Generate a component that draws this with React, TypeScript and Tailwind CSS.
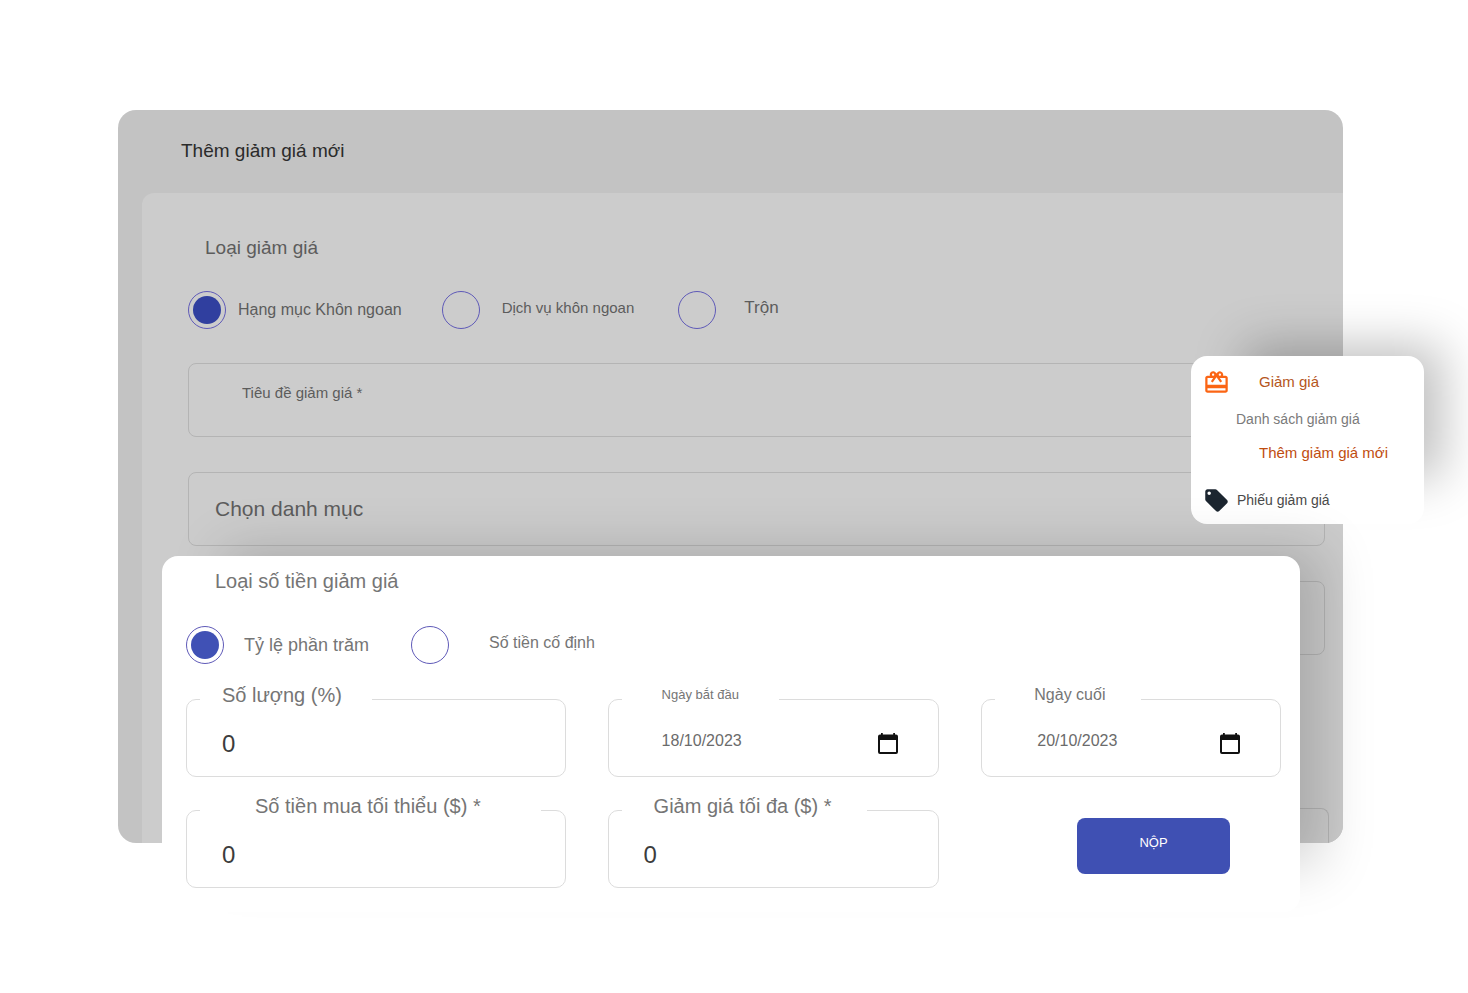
import { useState, type ReactNode } from "react";
import { MdCardGiftcard, MdLocalOffer } from "react-icons/md";

type RadioProps = {
    name: string;
    label: string;
    checked: boolean;
    onChange: () => void;
    className: string;
    textClass: string;
    dotClass: string;
};

function Radio({ name, label, checked, onChange, className, textClass, dotClass }: RadioProps) {
    return (
        <label className={`flex items-center ${className}`}>
            <input
                type="radio"
                name={name}
                checked={checked}
                onChange={onChange}
                className={`size-[38px] shrink-0 appearance-none rounded-full border border-[#5f5ab8] bg-clip-content p-1 ${dotClass}`}
            />
            <span className={textClass}>{label}</span>
        </label>
    );
}

type FieldProps = {
    id: string;
    label: string;
    legendClass: string;
    children: ReactNode;
};

// Outlined field with the label sitting in a notch of the top border
function Field({ id, label, legendClass, children }: FieldProps) {
    return (
        <fieldset className="min-w-0 rounded-[10px] border border-[#dcdcdc]">
            <legend className={`ml-[13px] pb-2 leading-6 text-[#757575] ${legendClass}`}>
                <label htmlFor={id}>{label}</label>
            </legend>
            <div className="flex h-[61px] items-center pb-1">{children}</div>
        </fieldset>
    );
}

function CalendarIcon() {
    return (
        <svg viewBox="0 0 20 21" className="h-[21px] w-5" aria-hidden="true">
            <path
                fill="#111"
                fillRule="evenodd"
                d="M3 0h1.800v1.500h10.400V0H17v1.500h1a2 2 0 0 1 2 2V19a2 2 0 0 1-2 2H2a2 2 0 0 1-2-2V3.500a2 2 0 0 1 2-2h1V0ZM2 7v12h16V7H2Z"
            />
        </svg>
    );
}

const discountTypes = [
    { label: "Hạng mục Khôn ngoan", className: "gap-3 mr-10", textClass: "text-base" },
    { label: "Dịch vụ khôn ngoan", className: "gap-[22px] mr-11", textClass: "text-[15px] pb-1" },
    { label: "Trộn", className: "gap-7", textClass: "text-[17px] pb-1" },
];

const amountTypes = [
    { label: "Tỷ lệ phần trăm", className: "gap-5 mr-[42px]", textClass: "text-lg" },
    { label: "Số tiền cố định", className: "gap-10", textClass: "text-base pb-1" },
];

export default function App() {
    const [discountType, setDiscountType] = useState(0);
    const [amountType, setAmountType] = useState(0);
    const [amount, setAmount] = useState("0");
    const [minPurchase, setMinPurchase] = useState("0");
    const [maxDiscount, setMaxDiscount] = useState("0");
    const [startDate, setStartDate] = useState("18/10/2023");
    const [endDate, setEndDate] = useState("20/10/2023");

    return (
        <main className="min-h-screen overflow-x-hidden bg-white pt-[110px] pr-[125px] pb-20 pl-[118px] font-['Liberation_Sans',Arial,sans-serif]">
            <div className="relative">
                {/* Page behind the highlighted panels */}
                <section className="overflow-hidden rounded-[18px] bg-[#c3c3c3]">
                    <h1 className="px-[63px] pt-[25px] pb-[26px] text-[19px] leading-8 text-[#2b2b2b]">Thêm giảm giá mới</h1>
                    <div className="ml-6 rounded-tl-xl bg-[#cccccc] pr-[18px] pl-[46px] pt-[39px]">
                        <h2 className="pl-[17px] text-[19px] leading-8 text-[#5c5c5c]">Loại giảm giá</h2>
                        <div className="mt-[27px] flex items-center text-[#5c5c5c]">
                            {discountTypes.map((t, i) => (
                                <Radio
                                    key={t.label}
                                    name="discountType"
                                    label={t.label}
                                    checked={discountType === i}
                                    onChange={() => setDiscountType(i)}
                                    className={t.className}
                                    textClass={t.textClass}
                                    dotClass="checked:bg-[#303f9f]"
                                />
                            ))}
                        </div>
                        <div className="mt-[34px] space-y-[35px]">
                            <input
                                type="text"
                                aria-label="Tiêu đề giảm giá"
                                placeholder="Tiêu đề giảm giá *"
                                className="block h-[74px] w-full rounded-lg border border-[#b4b4b4] bg-transparent px-[53px] pb-4 text-[15px] placeholder:text-[#5c5c5c]"
                            />
                            <select
                                aria-label="Danh mục"
                                className="block h-[74px] w-full appearance-none rounded-lg border border-[#b4b4b4] bg-transparent px-[26px] text-[21px] text-[#5c5c5c]"
                            >
                                <option>Chọn danh mục</option>
                            </select>
                            <div className="h-[74px] rounded-lg border border-[#b4b4b4]" />
                        </div>
                        <div className="-mr-1 mt-[153px] h-[35px] rounded-t-lg border border-b-0 border-[#b4b4b4]" />
                    </div>
                </section>

                {/* Sidebar menu */}
                <nav className="absolute top-[246px] -right-[81px] w-[233px] rounded-2xl bg-white px-3 pt-3 pb-2.5 shadow-[36px_-28px_50px_-18px_rgba(0,0,0,0.26)]">
                    <a href="#discounts" className="flex h-7 items-center gap-[29px] text-[15px] text-[#b5561c]">
                        <MdCardGiftcard className="size-[27px] text-[#fb6514]" />
                        Giảm giá
                    </a>
                    <ul className="mt-1.5">
                        <li>
                            <a href="#discount-list" className="block pl-[33px] text-sm leading-[34px] text-[#7a7a7a]">Danh sách giảm giá</a>
                        </li>
                        <li>
                            <a href="#add-discount" className="block pl-14 text-[15px] leading-[34px] text-[#bf4d10]">Thêm giảm giá mới</a>
                        </li>
                    </ul>
                    <a href="#coupons" className="mt-4 flex h-7 items-center gap-[7px] text-sm text-[#4a4a4a]">
                        <MdLocalOffer className="size-[27px] text-[#1c2630]" />
                        Phiếu giảm giá
                    </a>
                </nav>

                {/* Discount amount form */}
                <form
                    onSubmit={e => e.preventDefault()}
                    className="absolute top-[446px] right-[43px] left-11 rounded-2xl bg-white pt-[9px] pr-[19px] pb-6 pl-6 shadow-[42px_-26px_50px_-20px_rgba(0,0,0,0.17)]"
                >
                    <h2 className="pl-[29px] text-xl leading-8 text-[#757575]">Loại số tiền giảm giá</h2>
                    <div className="mt-[29px] flex items-center text-[#757575]">
                        {amountTypes.map((t, i) => (
                            <Radio
                                key={t.label}
                                name="amountType"
                                label={t.label}
                                checked={amountType === i}
                                onChange={() => setAmountType(i)}
                                className={t.className}
                                textClass={t.textClass}
                                dotClass="checked:bg-[#4051b5]"
                            />
                        ))}
                    </div>
                    <div className="mt-[19px] grid grid-cols-[380fr_332fr_300fr] gap-x-[42px] gap-y-[17px]">
                        <Field id="amount" label="Số lượng (%)" legendClass="pl-[22px] pr-[30px] text-xl">
                            <input
                                id="amount"
                                value={amount}
                                onChange={e => setAmount(e.target.value)}
                                className="w-full px-[35px] text-2xl text-[#3c3c3c] outline-none"
                            />
                        </Field>
                        <Field id="start" label="Ngày bắt đầu" legendClass="px-10 text-[13px]">
                            <input
                                id="start"
                                value={startDate}
                                onChange={e => setStartDate(e.target.value)}
                                className="min-w-0 flex-1 pb-1.5 pl-[53px] text-base text-[#6b6b6b] outline-none"
                            />
                            <button type="button" aria-label="Chọn ngày bắt đầu" className="pr-10">
                                <CalendarIcon />
                            </button>
                        </Field>
                        <Field id="end" label="Ngày cuối" legendClass="pl-[39px] pr-9 text-base">
                            <input
                                id="end"
                                value={endDate}
                                onChange={e => setEndDate(e.target.value)}
                                className="min-w-0 flex-1 pb-1.5 pl-[55px] text-base text-[#6b6b6b] outline-none"
                            />
                            <button type="button" aria-label="Chọn ngày cuối" className="pr-10">
                                <CalendarIcon />
                            </button>
                        </Field>
                        <Field id="minPurchase" label="Số tiền mua tối thiểu ($) *" legendClass="pl-[55px] pr-[60px] text-xl">
                            <input
                                id="minPurchase"
                                value={minPurchase}
                                onChange={e => setMinPurchase(e.target.value)}
                                className="w-full px-[35px] text-2xl text-[#3c3c3c] outline-none"
                            />
                        </Field>
                        <Field id="maxDiscount" label="Giảm giá tối đa ($) *" legendClass="pl-8 pr-9 text-xl">
                            <input
                                id="maxDiscount"
                                value={maxDiscount}
                                onChange={e => setMaxDiscount(e.target.value)}
                                className="w-full px-[35px] text-2xl text-[#3c3c3c] outline-none"
                            />
                        </Field>
                        <button
                            type="submit"
                            className="mr-[51px] mb-3.5 h-14 w-[153px] self-end justify-self-end rounded-lg bg-[#3f50b3] pb-1.5 text-[13px] text-white"
                        >
                            NỘP
                        </button>
                    </div>
                </form>
            </div>
        </main>
    );
}
